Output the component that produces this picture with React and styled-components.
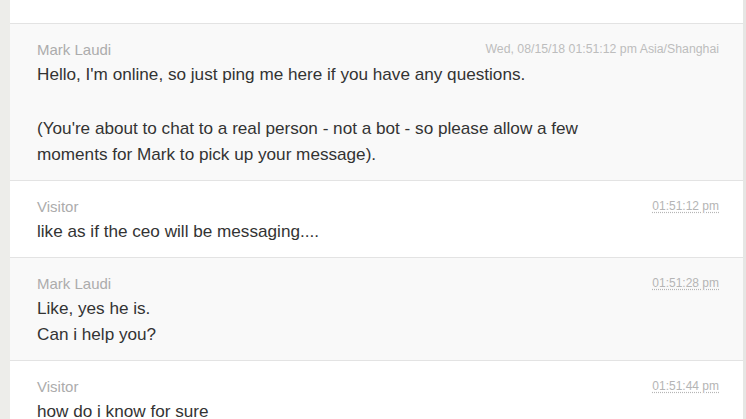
import React from 'react'
import styled, { createGlobalStyle } from 'styled-components'

const GlobalStyle = createGlobalStyle`
  html, body {
    margin: 0;
    padding: 0;
    background: #ededea;
  }
  body {
    font-family: "Liberation Sans", Arial, sans-serif;
  }
`

const messages = [
  {
    author: 'Mark Laudi',
    time: 'Wed, 08/15/18 01:51:12 pm Asia/Shanghai',
    full: true,
    shaded: true,
    paragraphs: [
      ["Hello, I'm online, so just ping me here if you have any questions."],
      [
        "(You're about to chat to a real person - not a bot - so please allow a few",
        'moments for Mark to pick up your message).',
      ],
    ],
  },
  {
    author: 'Visitor',
    time: '01:51:12 pm',
    paragraphs: [['like as if the ceo will be messaging....']],
  },
  {
    author: 'Mark Laudi',
    time: '01:51:28 pm',
    shaded: true,
    paragraphs: [['Like, yes he is.', 'Can i help you?']],
  },
  {
    author: 'Visitor',
    time: '01:51:44 pm',
    paragraphs: [['how do i know for sure']],
  },
]

const App = () => {
  return (
    <>
      <GlobalStyle />
      <Page>
        <Panel>
          <TopSpace />
          {messages.map((m, i) => (
            <Message key={i} $shaded={m.shaded}>
              <MetaRow>
                <Author>{m.author}</Author>
                {m.full ? <Stamp>{m.time}</Stamp> : <ShortStamp title={m.time}>{m.time}</ShortStamp>}
              </MetaRow>
              {m.paragraphs.map((p, j) => (
                <Paragraph key={j}>
                  {p.map((line, k) => (
                    <React.Fragment key={k}>
                      {k > 0 && <br />}
                      {line}
                    </React.Fragment>
                  ))}
                </Paragraph>
              ))}
            </Message>
          ))}
        </Panel>
      </Page>
    </>
  )
}

const Page = styled.div`
  height: 419px;
  overflow: hidden;
  padding-left: 10px;
  box-sizing: border-box;
`

const Panel = styled.div`
  background: #fff;
  border-right: 3px solid #e6e6e4;
  min-height: 100%;
`

const TopSpace = styled.div`
  height: 23px;
  border-bottom: 1px solid #e3e3e3;
`

const Message = styled.div`
  background: ${(p) => (p.$shaded ? '#f9f9f9' : '#fff')};
  border-bottom: 1px solid #e3e3e3;
  padding: 15px 24px 13px 27px;
`

const MetaRow = styled.div`
  display: flex;
  justify-content: space-between;
  align-items: center;
  height: 20px;
  margin-bottom: 2px;
`

const Author = styled.span`
  font-size: 15px;
  color: #acacac;
`

const Stamp = styled.span`
  font-size: 12.3px;
  color: #bdbdbd;
`

const ShortStamp = styled.abbr`
  font-size: 12px;
  color: #b5b5b5;
  text-decoration: underline dotted;
  text-underline-offset: 2px;
`

const Paragraph = styled.p`
  margin: 0;
  font-size: 17.15px;
  line-height: 26px;
  color: #333;

  & + & {
    margin-top: 28px;
  }
`

export default App
